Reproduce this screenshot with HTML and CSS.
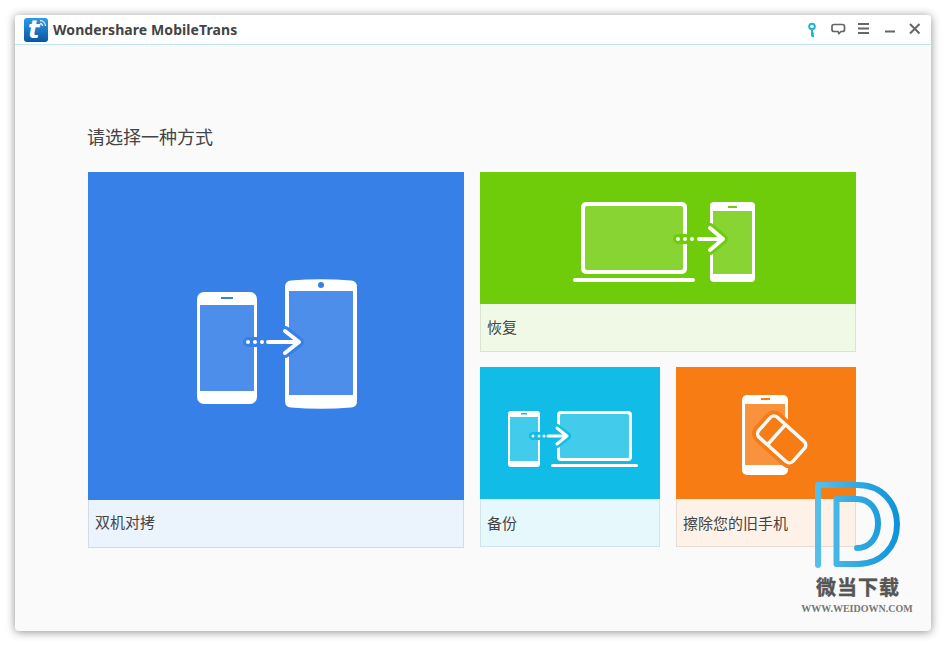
FILE: index.html
```html
<!DOCTYPE html>
<html lang="en">
<head>
    <meta charset="UTF-8">
    <meta name="viewport" content="width=device-width, initial-scale=1.0">
    <title>Wondershare MobileTrans</title>
    <link rel="stylesheet" href="styles.css">
</head>
<body>
    <div class="window">
        <header class="titlebar">
            <div class="app-logo">
                <svg width="24" height="24" viewBox="0 0 24 24">
                    <defs>
                        <linearGradient id="logoBg" x1="0" y1="0" x2="0" y2="1">
                            <stop offset="0" stop-color="#2f9be0"/>
                            <stop offset="1" stop-color="#0a55a5"/>
                        </linearGradient>
                    </defs>
                    <rect width="24" height="24" rx="3" fill="url(#logoBg)"/>
                    <path d="M16 2.500a5.500 5.500 0 0 1 5.500 5.500M16 5.500a2.500 2.500 0 0 1 2.500 2.500" fill="none" stroke="#cfe6f7" stroke-width="1.300"/>
                </svg>
                <span class="app-logo-t">t</span>
            </div>
            <span class="app-name">Wondershare MobileTrans</span>
            <div class="win-controls">
                <svg width="25" height="16" viewBox="0 0 25 16"><circle cx="10" cy="4.500" r="2.800" fill="none" stroke="#1fb4d6" stroke-width="2"/><path d="M10 7v7.500M10 11.500h2M10 14h2" fill="none" stroke="#1fb4d6" stroke-width="2"/></svg>
                <svg width="25" height="16" viewBox="0 0 25 16"><path d="M7 2.500h8.500q2 0 2 2v3q0 2-2 2h-1.500l-2 2-1-2h-4q-2 0-2-2v-3q0-2 2-2z" fill="none" stroke="#666" stroke-width="1.700"/></svg>
                <svg width="25" height="16" viewBox="0 0 25 16"><path d="M6 2h11M6 6.500h11M6 11h11" fill="none" stroke="#666" stroke-width="2"/></svg>
                <svg width="25" height="16" viewBox="0 0 25 16"><path d="M8 9.500h10" fill="none" stroke="#666" stroke-width="2"/></svg>
                <svg width="25" height="16" viewBox="0 0 25 16"><path d="M8 2l9.500 9.500M17.500 2l-9.500 9.500" fill="none" stroke="#666" stroke-width="2"/></svg>
            </div>
        </header>

        <main class="content">
            <h2 class="page-title">请选择一种方式</h2>
            <div class="modes">
                <div class="card card-blue card-large">
                    <div class="card-art">
                        <svg width="376" height="328" viewBox="88 172 376 328">
                            <rect x="197" y="292" width="60" height="112" rx="7" fill="#fff"/>
                            <rect x="200" y="305" width="54" height="86" fill="#4d8eea"/>
                            <rect x="221" y="297" width="12" height="2" fill="#3680e8"/>
                            <path d="M285 287q0-6 6-6.500q30-2.500 60 0q6 .5 6 6.500v114q0 6-6 6.500q-30 2.500-60 0q-6-.5-6-6.500z" fill="#fff"/>
                            <rect x="289" y="291" width="64" height="104" fill="#4d8eea"/>
                            <circle cx="321" cy="285" r="3" fill="#3680e8"/>
                            <path d="M248 342h19M285 331l14 11-14 11M267 342h32" fill="none" stroke="#3680e8" stroke-width="10" stroke-linecap="round" stroke-linejoin="round"/>
                            <circle cx="248" cy="342" r="2" fill="#fff"/>
                            <circle cx="255" cy="342" r="2" fill="#fff"/>
                            <circle cx="262" cy="342" r="2" fill="#fff"/>
                            <path d="M268 342h31M285 331l14 11-14 11" fill="none" stroke="#fff" stroke-width="4" stroke-linecap="round" stroke-linejoin="round"/>
                        </svg>
                    </div>
                    <div class="card-label">双机对拷</div>
                </div>

                <div class="modes-side">
                    <div class="card card-green">
                        <div class="card-art">
                            <svg width="376" height="132" viewBox="480 172 376 132">
                                <rect x="581" y="202" width="106" height="72" rx="5" fill="#fff"/>
                                <rect x="585" y="206" width="98" height="64" rx="2" fill="#88d433"/>
                                <rect x="573" y="278" width="122" height="4" rx="2" fill="#fff"/>
                                <rect x="710" y="202" width="45" height="80" rx="4" fill="#fff"/>
                                <rect x="713" y="211" width="39" height="63" fill="#88d433"/>
                                <rect x="728" y="206" width="9" height="2" fill="#6fcc0a"/>
                                <path d="M678 239h20M710 228l13 11-13 11M698 239h25" fill="none" stroke="#6fcc0a" stroke-width="10" stroke-linecap="round" stroke-linejoin="round"/>
                                <circle cx="678" cy="239" r="2" fill="#fff"/>
                                <circle cx="685" cy="239" r="2" fill="#fff"/>
                                <circle cx="692" cy="239" r="2" fill="#fff"/>
                                <path d="M699 239h24M710 228l13 11-13 11" fill="none" stroke="#fff" stroke-width="4" stroke-linecap="round" stroke-linejoin="round"/>
                            </svg>
                        </div>
                        <div class="card-label">恢复</div>
                    </div>

                    <div class="modes-row">
                        <div class="card card-cyan">
                            <div class="card-art">
                                <svg width="180" height="132" viewBox="480 367 180 132">
                                    <rect x="508" y="411" width="32" height="56" rx="3" fill="#fff"/>
                                    <rect x="510" y="417" width="28" height="44" fill="#43cbeb"/>
                                    <rect x="521" y="413" width="6" height="1.500" fill="#11bde6"/>
                                    <rect x="557" y="411" width="75" height="50" rx="4" fill="#fff"/>
                                    <rect x="560" y="414" width="69" height="44" rx="1.500" fill="#43cbeb"/>
                                    <rect x="551" y="464" width="87" height="3" rx="1.500" fill="#fff"/>
                                    <path d="M533 436h14M557 428l10 8-10 8M547 436h20" fill="none" stroke="#11bde6" stroke-width="8" stroke-linecap="round" stroke-linejoin="round"/>
                                    <circle cx="533" cy="436" r="1.500" fill="#fff"/>
                                    <circle cx="539" cy="436" r="1.500" fill="#fff"/>
                                    <circle cx="544" cy="436" r="1.500" fill="#fff"/>
                                    <path d="M548 436h19M557 428l10 8-10 8" fill="none" stroke="#fff" stroke-width="3" stroke-linecap="round" stroke-linejoin="round"/>
                                </svg>
                            </div>
                            <div class="card-label">备份</div>
                        </div>

                        <div class="card card-orange">
                            <div class="card-art">
                                <svg width="180" height="132" viewBox="676 367 180 132">
                                    <rect x="742" y="395" width="46" height="80" rx="5" fill="#fff"/>
                                    <rect x="745" y="404" width="40" height="61" fill="#f9923c"/>
                                    <rect x="761" y="398" width="9" height="2" fill="#f77c14"/>
                                    <g transform="rotate(42 782 439)">
                                        <rect x="759" y="426" width="46" height="27" rx="5" fill="#f77c14" stroke="#f77c14" stroke-width="11"/>
                                        <rect x="759" y="426" width="46" height="27" rx="5" fill="#f77c14" stroke="#f0fafc" stroke-width="3.500"/>
                                        <path d="M775 426v27" stroke="#f0fafc" stroke-width="3.500"/>
                                    </g>
                                </svg>
                            </div>
                            <div class="card-label">擦除您的旧手机</div>
                        </div>
                    </div>
                </div>
            </div>
        </main>

        <div class="watermark">
            <svg width="90" height="90" viewBox="812 481 90 90">
                <defs>
                    <linearGradient id="wmStroke" x1="0" y1="0" x2="1" y2="0">
                        <stop offset="0" stop-color="#55bfea"/>
                        <stop offset="1" stop-color="#0f94da"/>
                    </linearGradient>
                </defs>
                <path d="M818 565V485H858C882 485 897 503 897 524.500S882 564 858 564H836.500V499H857C870 499 878 510 878 523.500S870 548 857 548" fill="none" stroke="url(#wmStroke)" stroke-width="6" stroke-linecap="round" stroke-linejoin="round"/>
            </svg>
            <div class="wm-name">微当下载</div>
            <div class="wm-url">WWW.WEIDOWN.COM</div>
        </div>
    </div>
</body>
</html>
```

FILE: styles.css
```css
body {
    margin: 0;
    padding: 15px;
    background: #fff;
    font-family: "Noto Sans CJK SC", "Noto Sans", sans-serif;
    color: #444;
}

.window {
    position: relative;
    width: 916px;
    height: 616px;
    background: #fafafa;
    border-radius: 4px;
    box-shadow: 0 1px 10px rgba(0, 0, 0, 0.45);
    overflow: hidden;
}

.titlebar {
    display: flex;
    align-items: center;
    box-sizing: border-box;
    height: 30px;
    padding: 0 4px 0 9px;
    background: #fff;
    border-bottom: 1px solid #c3e6ee;
}
.app-logo {
    position: relative;
    flex-shrink: 0;
    width: 24px;
    height: 24px;
}
.app-logo svg {
    display: block;
}
.app-logo-t {
    position: absolute;
    left: 4px;
    top: 1px;
    font-family: "DejaVu Sans", sans-serif;
    font-style: italic;
    font-weight: bold;
    font-size: 24px;
    line-height: 22px;
    color: #fff;
}
.app-name {
    margin-left: 5px;
    font-family: "Noto Sans", sans-serif;
    font-size: 14px;
    font-weight: 700;
    letter-spacing: 0.08px;
    color: #444;
}
.win-controls {
    display: flex;
    margin-left: auto;
}

.content {
    padding: 79px 0 0 73px;
}
.page-title {
    margin: 0 0 24px -1px;
    font-size: 18px;
    font-weight: normal;
    line-height: 24px;
}

.modes {
    display: flex;
    gap: 16px;
}
.modes-side {
    display: flex;
    flex-direction: column;
    gap: 15px;
    width: 376px;
}
.modes-row {
    display: flex;
    gap: 16px;
}

.card {
    width: 100%;
}
.card-large {
    width: 376px;
    flex-shrink: 0;
}
.card-art svg {
    display: block;
}
.card-label {
    box-sizing: border-box;
    height: 48px;
    padding-left: 6px;
    border: 1px solid;
    border-top: none;
    font-size: 15px;
    line-height: 45px;
    color: #444;
}

.card-blue .card-art { background: #3680e8; }
.card-blue .card-label { background: #ebf3fd; border-color: #d3dbe6; line-height: 44px; }
.card-green .card-art { background: #6fcc0a; }
.card-green .card-label { background: #f0f9e6; border-color: #dbe3d2; }
.card-cyan .card-art { background: #11bde6; }
.card-cyan .card-label { background: #e7f8fc; border-color: #d0e3e8; line-height: 47px; }
.card-orange .card-art { background: #f77c14; }
.card-orange .card-label { background: #fef2e8; border-color: #e6dcd3; line-height: 47px; }

.watermark {
    position: absolute;
    left: 786px;
    top: 466px;
    width: 112px;
    display: flex;
    flex-direction: column;
    align-items: center;
}
.wm-name {
    font-size: 20px;
    font-weight: bold;
    line-height: 24px;
    letter-spacing: 1px;
    margin: 4px 0 0 2px;
    color: #555;
    -webkit-text-stroke: 0.4px #555;
}
.wm-url {
    font-family: "Liberation Serif", serif;
    font-size: 10px;
    font-weight: bold;
    line-height: 14px;
    margin-top: 3px;
    color: #777;
    white-space: nowrap;
}
```
